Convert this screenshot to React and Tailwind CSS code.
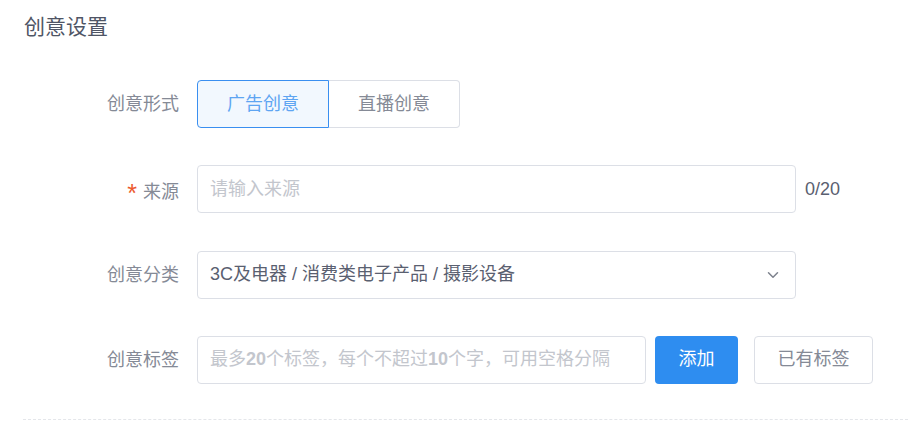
import React from 'react';
import { ChevronDown } from 'lucide-react';

const font = { fontFamily: '"Liberation Sans", "Noto Sans CJK SC", sans-serif' };

const Row = ({ label, required, children }) => (
  <div className="flex items-center h-12">
    <label className="w-[155px] shrink-0 text-right text-[18px] text-[#858a96] leading-none">
      {required && (
        <span className="inline-block translate-y-[4px] text-[#ec5a2f] text-[25px] leading-none mr-[6px]">*</span>
      )}
      {label}
    </label>
    <div className="ml-[18px] flex items-center h-full">{children}</div>
  </div>
);

export default function App() {
  return (
    <div className="w-[908px] h-[424px] bg-white overflow-hidden" style={font}>
      <h2 className="pl-6 pt-[14px] text-[21px] leading-[26px] text-[#4f5565]">创意设置</h2>

      <div className="mt-[40px] pl-6 flex flex-col gap-[37.3px]">
        <Row label="创意形式">
          <div className="flex h-full">
            <button className="w-[132px] h-full rounded-l border border-[#3a8ff0] bg-[#f2f8fe] text-[18px] text-[#5ea5f2]">
              广告创意
            </button>
            <button className="w-[131px] h-full rounded-r border border-l-0 border-[#dcdfe6] bg-white text-[18px] text-[#858a96]">
              直播创意
            </button>
          </div>
        </Row>

        <Row label="来源" required>
          <div className="w-[599px] h-full rounded border border-[#dcdfe6] flex items-center px-3 text-[18px] text-[#c3c6cd]">
            请输入来源
          </div>
          <span className="ml-[9px] text-[18px] text-[#5a6070]">0/20</span>
        </Row>

        <Row label="创意分类">
          <div className="w-[599px] h-full rounded border border-[#dcdfe6] flex items-center justify-between pl-3 pr-[13px] text-[18px] text-[#5a6070]">
            <span>3C及电器 / 消费类电子产品 / 摄影设备</span>
            <ChevronDown size={18} strokeWidth={2} className="text-[#7d828d]" />
          </div>
        </Row>

        <Row label="创意标签">
          <div className="w-[449px] h-full rounded border border-[#dcdfe6] flex items-center px-3 text-[18px] text-[#c3c6cd] whitespace-nowrap">
            最多<b className="font-bold">20</b>个标签，每个不超过<b className="font-bold">10</b>个字，可用空格分隔
          </div>
          <button className="ml-[9px] w-[83px] h-full rounded bg-[#2e8df0] text-white text-[18px]">添加</button>
          <button className="ml-4 w-[119px] h-full rounded border border-[#dcdfe6] bg-white text-[#858a96] text-[18px]">
            已有标签
          </button>
        </Row>
      </div>

      <div className="ml-[23px] mt-[35px] border-t border-dashed border-[#e4e6ea]" />
    </div>
  );
}
